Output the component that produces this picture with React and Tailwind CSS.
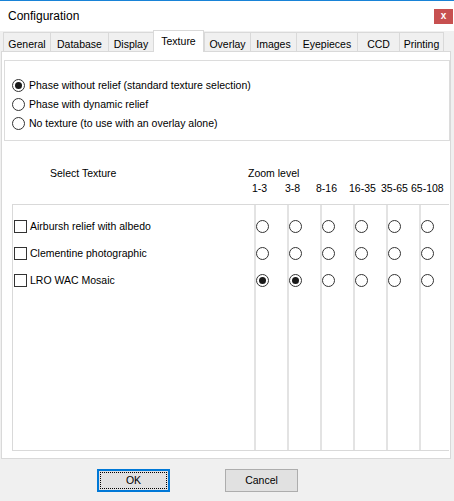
import { useState } from 'react'

const tabs = [
	{ label: 'General', w: 'w-[47px]' },
	{ label: 'Database', w: 'w-[58px]' },
	{ label: 'Display', w: 'w-[45px]' },
	{ label: 'Texture', w: 'w-[51px]' },
	{ label: 'Overlay', w: 'w-[46px]' },
	{ label: 'Images', w: 'w-[46px]' },
	{ label: 'Eyepieces', w: 'w-[61px]' },
	{ label: 'CCD', w: 'w-[42px]' },
	{ label: 'Printing', w: 'w-[45px]' },
]

const modes = [
	'Phase without relief (standard texture selection)',
	'Phase with dynamic relief',
	'No texture (to use with an overlay alone)',
]

const textures = ['Airbursh relief with albedo', 'Clementine photographic', 'LRO WAC Mosaic']

const zooms = [
	{ label: '1-3', w: 'w-[33px]' },
	{ label: '3-8', w: 'w-[31px]' },
	{ label: '8-16', w: 'w-[33px]' },
	{ label: '16-35', w: 'w-[32px]' },
	{ label: '35-65', w: 'w-[30px]' },
	{ label: '65-108', w: 'w-[36px]' },
]

function Radio({ checked, onClick }) {
	return (
		<span onClick={onClick} className="w-[13px] h-[13px] rounded-full border border-[#333] bg-white flex items-center justify-center shrink-0">
			{checked && <span className="w-[7px] h-[7px] rounded-full bg-[#1a1a1a]" />}
		</span>
	)
}

function Checkbox({ checked, onClick }) {
	return (
		<span onClick={onClick} className="w-[13px] h-[13px] border border-[#333] bg-white flex items-center justify-center shrink-0 text-[10px] leading-none">
			{checked && '✓'}
		</span>
	)
}

export default function App() {
	const [tab, setTab] = useState('Texture')
	const [mode, setMode] = useState(0)
	const [checked, setChecked] = useState([false, false, false])
	// -1 = no texture for that zoom level
	const [levels, setLevels] = useState([2, 2, -1, -1, -1, -1])

	function toggle(i) {
		const next = [...checked]
		next[i] = !next[i]
		setChecked(next)
	}

	function pick(col, row) {
		const next = [...levels]
		next[col] = row
		setLevels(next)
	}

	return (
		<div className="w-[454px] h-[501px] bg-[#f0f0f0] border-t border-[#1883d7] text-[10.5px] text-black font-['Liberation_Sans',Arial,sans-serif] overflow-hidden">
			{/* title bar */}
			<div className="h-[30px] bg-white flex items-center justify-between pl-[8px] pr-[1px]">
				<span className="text-[12px]">Configuration</span>
				<button className="w-[19px] h-[15px] bg-[#c75050] text-white text-[10px] font-bold leading-none flex items-center justify-center">x</button>
			</div>

			{/* tabs */}
			<div className="h-[20px] flex items-end pl-[3px]">
				{tabs.map((t, i) => {
					const active = t.label === tab
					return (
						<div
							key={t.label}
							onClick={() => setTab(t.label)}
							className={
								active
									? `${t.w} h-[22px] -mb-px relative z-10 bg-white border-t border-x border-[#d9d9d9] flex justify-center pt-[3px]`
									: `${t.w} h-[19px] bg-[#f0f0f0] border-t border-l border-[#d9d9d9] flex justify-center pt-[4px] ${i === tabs.length - 1 ? 'border-r' : ''}`
							}
						>
							{t.label}
						</div>
					)
				})}
			</div>

			{/* panel */}
			<div className="ml-px w-[450px] h-[408px] bg-white border border-[#d9d9d9]">
				<div className="ml-[2px] mt-[8px] w-[446px] h-[81px] border border-[#dcdcdc] pl-[7px] pt-[15px] flex flex-col">
					{modes.map((m, i) => (
						<label key={m} onClick={() => setMode(i)} className="h-[19px] flex items-center gap-[4px]">
							<Radio checked={mode === i} />
							<span>{m}</span>
						</label>
					))}
				</div>

				<div className="mt-[25px] h-[15px] flex items-center">
					<span className="ml-[48px] w-[198px]">Select Texture</span>
					<span>Zoom level</span>
				</div>
				<div className="h-[15px] flex items-center pl-[250px]">
					{zooms.map(z => (
						<span key={z.label} className={z.w}>{z.label}</span>
					))}
				</div>

				<div className="ml-[10px] mt-[8px] w-[437px] h-[247px] border-l border-y border-[#d9d9d9] flex">
					<div className="w-[241px] pt-[8px] pl-px flex flex-col">
						{textures.map((name, i) => (
							<label key={name} onClick={() => toggle(i)} className="h-[27px] flex items-center gap-[3px]">
								<Checkbox checked={checked[i]} />
								<span>{name}</span>
							</label>
						))}
					</div>
					{levels.map((sel, col) => (
						<div key={col} className={`${col === 5 ? 'w-[30px]' : 'w-[33px]'} border-l-2 border-[#e3e3e3] pt-[8px] flex flex-col`}>
							{textures.map((name, row) => (
								<div key={name} className="h-[27px] flex items-center">
									<Radio checked={sel === row} onClick={() => pick(col, row)} />
								</div>
							))}
						</div>
					))}
				</div>
			</div>

			{/* buttons */}
			<div className="mt-[10px] flex pl-[97px] gap-[55px]">
				<button className="w-[73px] h-[23px] bg-[#e1e1e1] border-2 border-[#0078d7] flex items-center justify-center p-px">
					<span className="w-full h-full border border-dotted border-black flex items-center justify-center">OK</span>
				</button>
				<button className="w-[73px] h-[23px] bg-[#e1e1e1] border border-[#adadad] flex items-center justify-center">Cancel</button>
			</div>
		</div>
	)
}
